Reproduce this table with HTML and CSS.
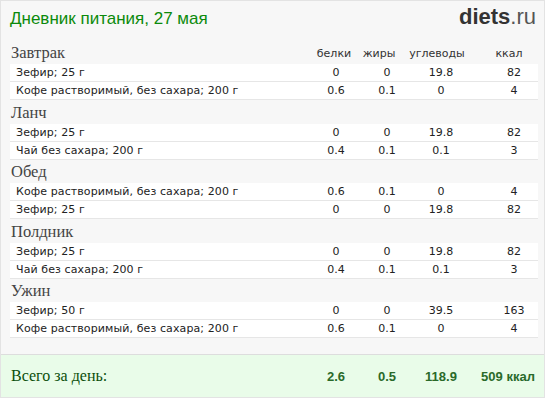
FILE: index.html
```html
<!DOCTYPE html>
<html lang="ru">
<head>
<meta charset="utf-8">
<link rel="stylesheet" href="styles.css">
</head>
<body>
<div class="page">
  <div class="top">
    <h1 class="title">Дневник питания, 27 мая</h1>
    <div class="logo"><b>diets</b>.ru</div>
  </div>
  <div class="meals">
    <div class="meal">
      <div class="meal-head first">
        <span class="meal-name">Завтрак</span>
        <span class="h h1">белки</span><span class="h h2">жиры</span><span class="h h3">углеводы</span><span class="h h4">ккал</span>
      </div>
      <div class="row"><span class="name">Зефир; 25 г</span><span class="v c1">0</span><span class="v c2">0</span><span class="v c3">19.8</span><span class="v c4">82</span></div>
      <div class="row"><span class="name">Кофе растворимый, без сахара; 200 г</span><span class="v c1">0.6</span><span class="v c2">0.1</span><span class="v c3">0</span><span class="v c4">4</span></div>
    </div>
    <div class="meal">
      <div class="meal-head"><span class="meal-name">Ланч</span></div>
      <div class="row"><span class="name">Зефир; 25 г</span><span class="v c1">0</span><span class="v c2">0</span><span class="v c3">19.8</span><span class="v c4">82</span></div>
      <div class="row"><span class="name">Чай без сахара; 200 г</span><span class="v c1">0.4</span><span class="v c2">0.1</span><span class="v c3">0.1</span><span class="v c4">3</span></div>
    </div>
    <div class="meal">
      <div class="meal-head"><span class="meal-name">Обед</span></div>
      <div class="row"><span class="name">Кофе растворимый, без сахара; 200 г</span><span class="v c1">0.6</span><span class="v c2">0.1</span><span class="v c3">0</span><span class="v c4">4</span></div>
      <div class="row"><span class="name">Зефир; 25 г</span><span class="v c1">0</span><span class="v c2">0</span><span class="v c3">19.8</span><span class="v c4">82</span></div>
    </div>
    <div class="meal">
      <div class="meal-head"><span class="meal-name">Полдник</span></div>
      <div class="row"><span class="name">Зефир; 25 г</span><span class="v c1">0</span><span class="v c2">0</span><span class="v c3">19.8</span><span class="v c4">82</span></div>
      <div class="row"><span class="name">Чай без сахара; 200 г</span><span class="v c1">0.4</span><span class="v c2">0.1</span><span class="v c3">0.1</span><span class="v c4">3</span></div>
    </div>
    <div class="meal">
      <div class="meal-head"><span class="meal-name">Ужин</span></div>
      <div class="row"><span class="name">Зефир; 50 г</span><span class="v c1">0</span><span class="v c2">0</span><span class="v c3">39.5</span><span class="v c4">163</span></div>
      <div class="row"><span class="name">Кофе растворимый, без сахара; 200 г</span><span class="v c1">0.6</span><span class="v c2">0.1</span><span class="v c3">0</span><span class="v c4">4</span></div>
    </div>
  </div>
  <div class="total">
    <span class="total-label">Всего за день:</span>
    <span class="t t1">2.6</span><span class="t t2">0.5</span><span class="t t3">118.9</span><span class="t t4">509 ккал</span>
  </div>
</div>
</body>
</html>
```

FILE: styles.css
```css
html, body {
  margin: 0;
  padding: 0;
  background: #ffffff;
}

.page {
  width: 545px;
  height: 398px;
  box-sizing: border-box;
  border: 1px solid #e3e3e3;
  background: #f7f7f7;
  display: flex;
  flex-direction: column;
}

.top {
  display: flex;
  justify-content: space-between;
  align-items: flex-start;
  height: 39px;
  padding: 5px 8px 0 9px;
  box-sizing: border-box;
}

.title {
  margin: 3px 0 0 0;
  font-family: "Liberation Sans", Arial, sans-serif;
  font-size: 17px;
  font-weight: normal;
  line-height: 20px;
  color: #0b8a0b;
}

.logo {
  font-family: "Liberation Sans", Arial, sans-serif;
  font-size: 22px;
  line-height: 22px;
  color: #555555;
}

.logo b {
  color: #333333;
}

.meals {
  padding: 0 6px 0 9px;
}

.meal-head {
  display: flex;
  align-items: flex-end;
  height: 23.5px;
  padding-bottom: 2px;
  box-sizing: border-box;
}

.meal-head.first {
  height: 24px;
}

.meal-name {
  flex: 1;
  padding-left: 1px;
  font-family: "Liberation Serif", "Times New Roman", serif;
  font-size: 16.5px;
  line-height: 18px;
  color: #444444;
}

.h {
  font-family: "DejaVu Sans", Verdana, sans-serif;
  font-size: 11px;
  line-height: 14px;
  color: #333333;
  text-align: center;
  padding-bottom: 1px;
}

.h1 { width: 50px; }
.h2 { width: 40px; }
.h3 { width: 76px; }
.h4 { width: 48px; margin-left: 10px; margin-right: 5px; }

.row {
  display: flex;
  height: 18px;
  box-sizing: border-box;
  background: #ffffff;
  border-bottom: 1px solid #e6e6e6;
  font-family: "DejaVu Sans", Verdana, sans-serif;
  font-size: 11px;
  line-height: 17px;
  color: #222222;
}

.name {
  flex: 1;
  padding-left: 6px;
  white-space: nowrap;
  letter-spacing: 0.1px;
}

.v {
  text-align: center;
}

.c1 { width: 50px; }
.c2 { width: 50px; margin-left: 1px; }
.c3 { width: 56px; margin-left: 1px; }
.c4 { width: 48px; margin-left: 21px; }

.total {
  margin-top: auto;
  height: 43px;
  box-sizing: border-box;
  border-top: 1px solid #dddddd;
  background: #e9fce9;
  display: flex;
  align-items: center;
  padding: 0 6px 0 9px;
}

.total-label {
  flex: 1;
  font-family: "Liberation Serif", "Times New Roman", serif;
  font-size: 16px;
  color: #0b4f0b;
  padding-left: 1px;
}

.t {
  font-family: "Liberation Sans", Arial, sans-serif;
  font-size: 13px;
  font-weight: bold;
  color: #2a6a2a;
  text-align: center;
}

.t1 { width: 50px; }
.t2 { width: 50px; margin-left: 1px; }
.t3 { width: 56px; margin-left: 1px; }
.t4 { width: 60px; margin-left: 9px; }
```
